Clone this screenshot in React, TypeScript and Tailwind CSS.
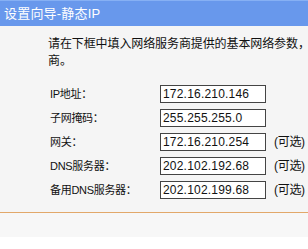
const rows = [
  { label: 'IP地址：', value: '172.16.210.146', optional: false },
  { label: '子网掩码：', value: '255.255.255.0', optional: false },
  { label: '网关：', value: '172.16.210.254', optional: true },
  { label: 'DNS服务器：', value: '202.102.192.68', optional: true },
  { label: '备用DNS服务器：', value: '202.102.199.68', optional: true },
]

const App = () => {
  return (
    <div className="w-[308px] h-[249px] overflow-hidden bg-white font-['Liberation_Sans','Noto_Sans_CJK_SC',sans-serif] text-[#111]">
      <div className="h-[26px] bg-[#6898ec] border-t border-[#86b0f4] flex items-center pl-[4px]">
        <span className="text-white text-[13px] tracking-[0.2px]">设置向导-静态IP</span>
      </div>
      <div className="bg-[#f5f5f5] pl-[48px] pt-[10px] pb-[13px]">
        <p className="text-[12px] leading-[17px] tracking-[-0.1px] whitespace-nowrap">
          请在下框中填入网络服务商提供的基本网络参数，
          <br />
          商。
        </p>
        <div className="flex flex-col gap-[6px] mt-[15px] pl-[2px]">
          {rows.map((r) => (
            <div key={r.label} className="flex items-center h-[18px]">
              <span className="w-[110px] text-[11px] tracking-[-0.3px] whitespace-nowrap">{r.label}</span>
              <div className="w-[106px] h-[18px] border border-[#444] bg-white flex items-center pl-[2px] text-[12px] tracking-[0.2px]">
                {r.value}
              </div>
              {r.optional && <span className="ml-[8px] text-[12px] tracking-[-0.3px]">(可选)</span>}
            </div>
          ))}
        </div>
      </div>
      <div className="h-px bg-[#e2a86a]" />
      <div className="h-[24px] bg-[#f7f7f7]" />
    </div>
  )
}

export default App
